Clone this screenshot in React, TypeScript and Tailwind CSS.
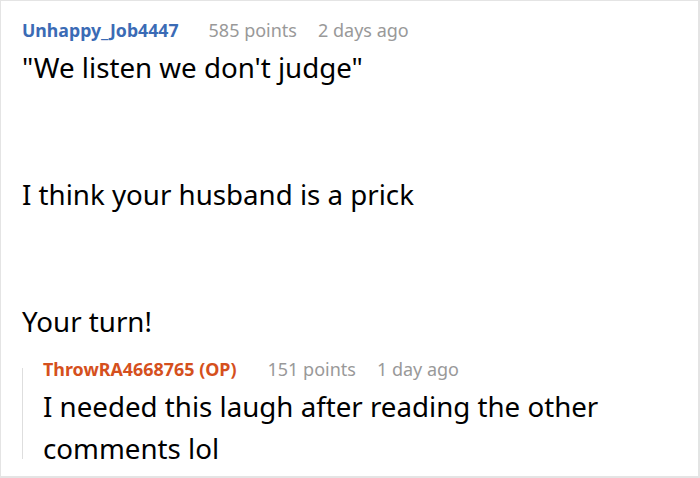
export default function App() {
  return (
    <div
      className="w-[700px] h-[478px] bg-white border border-[#e4e4e4] border-r-2 border-b-2 overflow-hidden"
      style={{ fontFamily: '"Noto Sans", "Open Sans", sans-serif' }}
    >
      <div className="pl-[21px] pt-[17px]">
        {/* top-level comment */}
        <div className="flex items-baseline text-[17.7px] leading-[24px]">
          <span className="font-bold text-[#3b6bb5]">Unhappy_Job4447</span>
          <span className="ml-[30px] text-[18px] text-[#999999]">585 points</span>
          <span className="ml-[21px] text-[18px] text-[#999999]">2 days ago</span>
        </div>
        <div className="mt-[4px] text-[27.7px] leading-[42.3px] text-black">
          <p>"We listen we don't judge"</p>
          <p>&nbsp;</p>
          <p>&nbsp;</p>
          <p>I think your husband is a prick</p>
          <p>&nbsp;</p>
          <p>&nbsp;</p>
          <p>Your turn!</p>
        </div>

        {/* reply */}
        <div className="mt-[15px] flex">
          <div className="w-px mt-[11px] mb-[11px] bg-[#dedede] shrink-0" />
          <div className="pl-[20px]">
            <div className="flex items-baseline text-[18px] leading-[24px]">
              <span className="font-bold text-[17.9px] text-[#d5501d]">ThrowRA4668765 (OP)</span>
              <span className="ml-[31px] text-[#999999]">151 points</span>
              <span className="ml-[21px] text-[#999999]">1 day ago</span>
            </div>
            <div className="mt-[4px] text-[27.7px] leading-[42.3px] text-black">
              <p>I needed this laugh after reading the other</p>
              <p>comments lol</p>
            </div>
          </div>
        </div>
      </div>
    </div>
  );
}
